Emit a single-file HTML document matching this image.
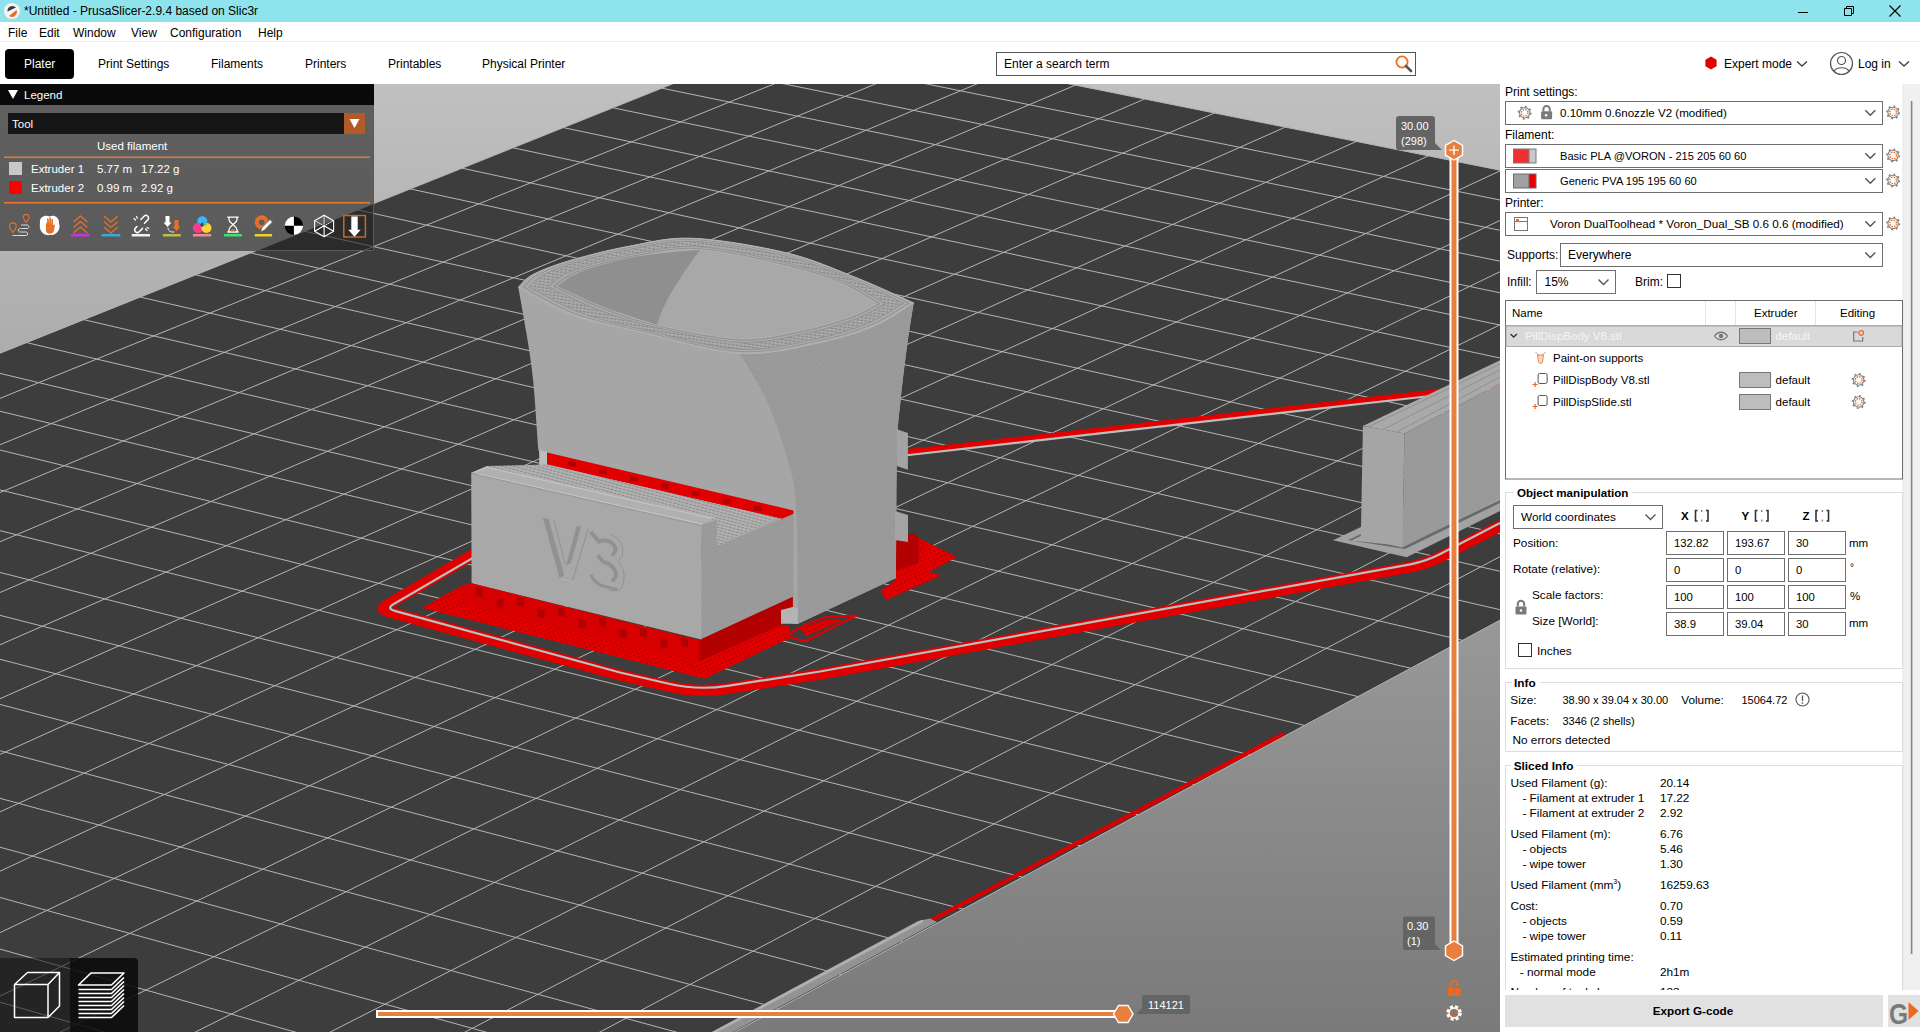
<!DOCTYPE html>
<html><head><meta charset="utf-8">
<style>
*{box-sizing:border-box}
html,body{margin:0;padding:0;width:1920px;height:1032px;overflow:hidden;background:#fff;font-family:"Liberation Sans",sans-serif;font-size:12px;color:#000}
.a{position:absolute;white-space:pre;line-height:1}
#title{position:absolute;left:0;top:0;width:1920px;height:22px;background:#8fe3ec}
#menu{position:absolute;left:0;top:22px;width:1920px;height:20px;background:#fff;border-bottom:1px solid #ececec}
#tabs{position:absolute;left:0;top:42px;width:1920px;height:42px;background:#fff}
#canvas{position:absolute;left:0;top:84px;width:1500px;height:948px;overflow:hidden;background:#7a7a7a}
#panel{position:absolute;left:1500px;top:84px;width:420px;height:948px;background:#fff;overflow:hidden}
.combo{position:absolute;border:1px solid #6e6e6e;background:#fff}
.chev{position:absolute;width:8px;height:8px;border-right:1.6px solid #555;border-bottom:1.6px solid #555;transform:rotate(45deg)}
</style></head><body>
<div id="title">
 <svg class="a" style="left:3px;top:2px" width="18" height="18" viewBox="0 0 18 18"><circle cx="9" cy="9" r="8" fill="#f4f4f4"/><path d="M4.5 9.5 A5 5 0 0 1 13 5.5 Z" fill="#3a3a3a"/><path d="M13.5 8 A5 5 0 0 1 6 14 Z" fill="#ec6a1e"/></svg>
 <div class="a" style="left:24px;top:5px;font-size:12px;color:#000">*Untitled - PrusaSlicer-2.9.4 based on Slic3r</div>
 <svg class="a" style="left:1797px;top:6px" width="12" height="12"><path d="M1 6.5H11" stroke="#000" stroke-width="1"/></svg>
 <svg class="a" style="left:1843px;top:5px" width="12" height="12"><path d="M1.5 3.5h7v7h-7z M3.5 3.5V1.5h7v7h-2" fill="none" stroke="#000" stroke-width="1"/></svg>
 <svg class="a" style="left:1888px;top:4px" width="14" height="14"><path d="M1.5 1.5L12.5 12.5M12.5 1.5L1.5 12.5" stroke="#000" stroke-width="1.1"/></svg>
</div>
<div id="menu">
 <div class="a" style="left:8px;top:5px">File</div>
 <div class="a" style="left:39px;top:5px">Edit</div>
 <div class="a" style="left:73px;top:5px">Window</div>
 <div class="a" style="left:131px;top:5px">View</div>
 <div class="a" style="left:170px;top:5px">Configuration</div>
 <div class="a" style="left:258px;top:5px">Help</div>
</div>
<div id="tabs">
 <div class="a" style="left:5px;top:7px;width:69px;height:30px;background:#000;border-radius:4px"></div>
 <div class="a" style="left:24px;top:16px;color:#fff">Plater</div>
 <div class="a" style="left:98px;top:16px">Print Settings</div>
 <div class="a" style="left:211px;top:16px">Filaments</div>
 <div class="a" style="left:305px;top:16px">Printers</div>
 <div class="a" style="left:388px;top:16px">Printables</div>
 <div class="a" style="left:482px;top:16px">Physical Printer</div>
 <div class="a" style="left:996px;top:10px;width:420px;height:24px;border:1px solid #555;background:#fff"></div>
 <div class="a" style="left:1004px;top:16px">Enter a search term</div>
 <svg class="a" style="left:1394px;top:12px" width="20" height="20" viewBox="0 0 20 20"><circle cx="8" cy="8" r="5.6" fill="none" stroke="#e8701f" stroke-width="1.8"/><path d="M12 12L17 17" stroke="#555" stroke-width="2.6" stroke-linecap="round"/></svg>
 <svg class="a" style="left:1704px;top:14px" width="14" height="14" viewBox="0 0 14 14"><polygon points="7,0.5 12.6,3.7 12.6,10.3 7,13.5 1.4,10.3 1.4,3.7" fill="#e20000"/></svg>
 <div class="a" style="left:1724px;top:16px">Expert mode</div>
 <svg class="a" style="left:1796px;top:18px" width="12" height="8"><path d="M1 1.5L6 6L11 1.5" fill="none" stroke="#444" stroke-width="1.4"/></svg>
 <svg class="a" style="left:1829px;top:9px" width="25" height="25" viewBox="0 0 25 25"><circle cx="12.5" cy="12.5" r="11" fill="none" stroke="#555" stroke-width="1.2"/><circle cx="12.5" cy="9.5" r="4" fill="none" stroke="#555" stroke-width="1.2"/><path d="M5 20.5C7 15.5 18 15.5 20 20.5" fill="none" stroke="#555" stroke-width="1.2"/></svg>
 <div class="a" style="left:1858px;top:16px">Log in</div>
 <svg class="a" style="left:1898px;top:18px" width="12" height="8"><path d="M1 1.5L6 6L11 1.5" fill="none" stroke="#444" stroke-width="1.4"/></svg>
</div>
<div id="canvas">
<svg width="1500" height="948" viewBox="0 0 1500 948" style="position:absolute;left:0;top:0;display:block">
<defs><linearGradient id="bg" x1="0" y1="0" x2="0" y2="1"><stop offset="0" stop-color="#c0c0c0"/><stop offset="1" stop-color="#7a7a7a"/></linearGradient></defs>
<rect width="1500" height="948" fill="url(#bg)"/>
<polygon fill="#3d3d3d" points="804.9,-53.1 2109.1,208.3 -232.8,1468.9 -1743.6,967.5"/>
<path fill="none" stroke="#b5b5b5" stroke-width="1" d="M804.9 -53.1L-1743.6 967.5M871.6 -39.7L-1668.9 992.3M938.9 -26.2L-1593.1 1017.4M1006.8 -12.6L-1516.4 1042.9M1075.4 1.1L-1438.7 1068.7M1144.6 15.0L-1359.9 1094.8M1214.5 29.0L-1280.1 1121.3M1285.1 43.2L-1199.3 1148.1M1356.4 57.4L-1117.3 1175.3M1428.4 71.9L-1034.3 1202.9M1501.0 86.4L-950.1 1230.8M1574.4 101.1L-864.7 1259.2M1648.5 116.0L-778.2 1287.9M1723.4 131.0L-690.5 1317.0M1799.0 146.1L-601.5 1346.5M1875.3 161.4L-511.3 1376.5M1952.5 176.9L-419.8 1406.8M2030.4 192.5L-327.0 1437.6M2109.1 208.3L-232.8 1468.9M804.9 -53.1L2109.1 208.3M757.9 -34.2L2067.3 230.8M710.3 -15.2L2024.9 253.6M662.0 4.2L1981.9 276.7M613.1 23.8L1938.2 300.2M563.4 43.6L1893.9 324.1M513.1 63.8L1848.9 348.3M462.1 84.2L1803.2 372.9M410.3 104.9L1756.8 397.9M357.9 126.0L1709.7 423.3M304.6 147.3L1661.8 449.0M250.6 168.9L1613.2 475.2M195.8 190.8L1563.8 501.8M140.3 213.1L1513.6 528.8M83.9 235.7L1462.5 556.3M26.6 258.6L1410.7 584.2M-31.5 281.9L1358.0 612.6M-90.4 305.5L1304.4 641.4M-150.3 329.4L1249.9 670.8M-211.1 353.8L1194.5 700.6M-272.8 378.5L1138.1 730.9M-335.5 403.6L1080.8 761.8M-399.2 429.1L1022.5 793.2M-463.8 455.0L963.1 825.1M-529.5 481.3L902.7 857.6M-596.3 508.0L841.3 890.7M-664.1 535.2L778.7 924.4M-733.1 562.8L715.0 958.7M-803.1 590.9L650.1 993.6M-874.4 619.4L584.0 1029.2M-946.8 648.4L516.7 1065.5M-1020.4 677.9L448.1 1102.4M-1095.3 707.9L378.2 1140.0M-1171.5 738.4L306.9 1178.3M-1249.0 769.4L234.3 1217.4M-1327.8 801.0L160.3 1257.3M-1408.1 833.1L84.7 1297.9M-1489.7 865.8L7.7 1339.4M-1572.8 899.1L-70.8 1381.7M-1657.5 933.0L-151.0 1424.8M-1743.6 967.5L-232.8 1468.9"/>
<g transform="translate(0,-84)">
<defs><pattern id="hat" width="4" height="3" patternUnits="userSpaceOnUse" patternTransform="rotate(8)"><rect width="4" height="3" fill="#aaaaaa"/><rect x="0.5" y="1.8" width="2.6" height="1.1" fill="#7e7e7e"/></pattern><pattern id="hat2" width="4" height="3" patternUnits="userSpaceOnUse" patternTransform="rotate(15)"><rect width="4" height="3" fill="#b2b2b2"/><rect x="0.4" y="1.9" width="2.8" height="1" fill="#858585"/></pattern><pattern id="layers" width="6" height="2.2" patternUnits="userSpaceOnUse" patternTransform="rotate(-12)"><rect width="6" height="2.2" fill="#9d9d9d"/><rect y="1.4" width="6" height="0.7" fill="#939393"/></pattern><pattern id="dots" width="4" height="4" patternUnits="userSpaceOnUse" patternTransform="rotate(-25)"><rect width="4" height="4" fill="#e20000"/><rect x="1.5" y="1.5" width="1.2" height="1.2" fill="#8a0000"/></pattern></defs>
<path d="M1519.7 383.1L1425.7 393.6Q1425.7 393.6 1425.7 393.6L908.6 452.1Q908.6 452.1 908.6 452.1L581.0 495.9Q571.0 497.2 562.4 502.2L384.5 606.0" fill="none" stroke="#e00000" stroke-width="6" stroke-linejoin="round"/>
<path d="M570.1 496.7L386.6 603.7Q376.3 609.8 387.8 612.9L619.1 676.2Q619.1 676.2 619.1 676.2L668.6 687.6Q697.9 694.4 727.5 689.8L820.6 675.2Q820.6 675.2 820.6 675.2L1411.5 568.0Q1427.2 565.1 1441.4 557.8L1501.8 526.4" fill="none" stroke="#e00000" stroke-width="8.5" stroke-linejoin="round"/>
<path d="M573.0 501.7L398.0 603.8Q391.1 607.8 398.8 609.9L620.5 670.6Q620.5 670.6 620.5 670.6L668.8 681.7Q698.1 688.5 727.7 683.8L819.7 669.5Q819.7 669.5 819.7 669.5L1409.6 562.4Q1425.3 559.6 1439.5 552.2L1499.1 521.2" fill="none" stroke="#e00000" stroke-width="2" stroke-linejoin="round"/>
<path d="M1520.0 386.0L1426.0 396.5Q1426.0 396.5 1426.0 396.5L909.0 455.0Q909.0 455.0 909.0 455.0L581.9 498.7Q572.0 500.0 563.4 505.0L393.8 604.0Q386.0 608.5 394.7 610.9L620.0 672.5Q620.0 672.5 620.0 672.5L668.8 683.8Q698.0 690.5 727.6 685.9L820.0 671.5Q820.0 671.5 820.0 671.5L1410.3 564.4Q1426.0 561.5 1440.2 554.1L1500.0 523.0" fill="none" stroke="#bdbdbd" stroke-width="2.2" stroke-linejoin="round"/>
<path d="M1333.0 540.2L1363.0 526.0L1500.0 466.0L1500.0 511.0L1406.6 557.2Z" fill="#a2a2a2"/>
<path d="M1348.0 540.0L1363.0 533.0L1500.0 473.0L1500.0 503.0L1405.0 549.0Z" fill="#3d3d3d" fill-opacity="0.55"/>
<path d="M1351.0 540.5L1363.0 535.0L1500.0 476.0L1500.0 500.0L1404.0 546.0Z" fill="#a6a6a6"/>
<path d="M1362.9 426.1L1500.4 360.0L1500.4 383.5L1404.5 433.6Z" fill="#a9a9a9"/>
<path d="M1366.0 428.0L1500.0 364.0M1380 431L1500 370M1395 433L1500 377" stroke="#8d8d8d" stroke-width="0.9" fill="none"/>
<path d="M1404.5 433.6L1500.4 383.5L1500.4 498.6L1402.3 547.6Z" fill="url(#layers)"/>
<path d="M1362.9 426.1L1404.5 433.6L1402.3 547.6L1360.8 538.0Z" fill="#a5a5a5"/>
<path d="M893.0 537.0L918.6 538.0L957.0 557.0L929.2 572.0L942.0 575.2L886.6 599.7L880.2 591.2L895.0 580.6Z" fill="url(#dots)"/>
<path d="M893.0 539.0L913.0 533.0L918.6 538.0L918.6 563.0L893.0 572.0Z" fill="#b30000"/>
<path d="M518.3 287.2C520.8 285.1 524.4 278.9 533.0 274.5C541.6 270.1 553.8 265.2 570.0 260.5C586.2 255.8 609.4 249.7 630.0 246.0C650.6 242.3 667.5 237.1 693.7 238.3C719.9 239.5 760.0 246.4 787.2 253.0C814.4 259.6 835.9 269.7 857.0 278.0C878.1 286.3 904.2 298.8 913.7 302.9C912.7 309.4 909.8 325.9 907.6 342.1C905.4 358.3 902.4 382.0 900.6 400.0C898.8 418.0 897.8 420.3 897.0 450.0C896.2 479.7 896.2 556.7 896.0 578.0L798 623.8L792.6 623.8L792.6 548L716.8 548L547 468L538.3 449.8C537.4 438.2 535.1 399.7 533.1 380.0C531.1 360.3 528.7 347.2 526.2 331.7C523.7 316.2 519.6 294.6 518.3 287.2Z" fill="#a6a6a6"/>
<path d="M739.8 353.5C744.2 361.2 758.6 383.1 766.3 400.0C774.0 416.9 781.0 437.5 786.0 455.0C791.0 472.5 794.0 476.9 796.0 505.0C798.0 533.1 797.7 604.0 798.0 623.8L896 578C896.2 556.7 896.2 479.7 897.0 450.0C897.8 420.3 898.8 418.0 900.6 400.0C902.4 382.0 905.4 358.3 907.6 342.1C909.8 325.9 912.7 309.4 913.7 302.9C907.3 306.7 890.7 319.0 875.4 325.5C860.1 332.0 844.6 337.4 822.0 342.1C799.4 346.8 753.5 351.6 739.8 353.5Z" fill="url(#layers)"/>
<path d="M518.3 287.2C520.8 285.1 524.4 278.9 533.0 274.5C541.6 270.1 553.8 265.2 570.0 260.5C586.2 255.8 609.4 249.7 630.0 246.0C650.6 242.3 667.5 237.1 693.7 238.3C719.9 239.5 760.0 246.4 787.2 253.0C814.4 259.6 835.9 269.7 857.0 278.0C878.1 286.3 904.2 298.8 913.7 302.9C907.3 306.7 890.7 319.0 875.4 325.5C860.1 332.0 844.6 337.4 822.0 342.1C799.4 346.8 770.2 355.2 739.8 353.5C709.4 351.8 667.9 338.6 639.6 332.0C611.3 325.4 590.0 321.7 569.8 314.2C549.6 306.7 526.9 291.7 518.3 287.2Z" fill="#a4a4a4"/>
<path d="M530.1 286.9C532.6 284.9 537.0 278.9 545.0 274.8C553.0 270.7 563.3 266.6 577.9 262.3C592.6 258.0 613.4 252.4 633.0 249.0C652.6 245.6 669.9 240.4 695.6 241.7C721.3 243.1 761.1 250.8 787.1 257.1C813.2 263.3 832.7 271.8 851.9 279.5C871.1 287.2 894.0 299.2 902.5 303.1C896.7 306.4 882.3 316.9 867.8 322.8C853.3 328.7 836.7 334.3 815.4 338.6C794.1 343.0 768.3 350.5 739.9 349.0C711.4 347.5 671.4 336.0 644.8 329.8C618.2 323.7 599.4 319.2 580.3 312.1C561.1 305.0 538.5 291.1 530.1 286.9Z" fill="url(#hat)"/>
<path d="M546.6 286.6C549.1 284.7 554.7 278.9 561.8 275.2C568.9 271.6 576.4 268.4 589.0 264.7C601.6 261.1 619.0 256.2 637.2 253.2C655.4 250.2 673.3 244.9 698.2 246.5C723.2 248.1 762.6 256.9 787.1 262.7C811.5 268.6 828.2 274.8 844.8 281.6C861.4 288.4 879.7 299.8 886.7 303.5C881.8 306.1 870.5 314.0 857.1 319.0C843.7 324.1 825.7 329.8 806.2 333.7C786.6 337.7 765.6 343.9 739.9 342.7C714.3 341.5 676.3 332.3 652.1 326.7C628.0 321.2 612.5 315.9 594.9 309.2C577.3 302.5 554.7 290.3 546.6 286.6Z" fill="#a2a2a2"/>
<path d="M520.7 287.1C523.1 285.0 526.9 278.9 535.4 274.6C543.9 270.2 555.7 265.5 571.6 260.9C587.5 256.2 610.2 250.2 630.6 246.6C651.0 243.0 668.0 237.8 694.1 239.0C720.2 240.2 760.2 247.3 787.2 253.8C814.2 260.4 835.3 270.1 856.0 278.3C876.7 286.5 902.2 298.8 911.5 302.9C905.2 306.6 889.0 318.6 873.9 325.0C858.7 331.4 843.0 336.8 820.7 341.4C798.3 346.0 769.8 354.2 739.8 352.6C709.8 351.0 668.6 338.0 640.6 331.6C612.7 325.1 591.9 321.2 571.9 313.8C551.9 306.4 529.2 291.6 520.7 287.1Z" fill="none" stroke="#b4b4b4" stroke-width="0.8"/>
<path d="M523.4 287.1C525.9 285.0 529.9 278.9 538.2 274.6C546.5 270.3 557.9 265.8 573.4 261.3C588.9 256.7 611.1 250.9 631.3 247.3C651.5 243.7 668.5 238.5 694.5 239.8C720.5 241.0 760.5 248.3 787.2 254.8C813.9 261.2 834.5 270.6 854.8 278.6C875.1 286.7 899.8 298.9 908.8 303.0C902.7 306.6 887.0 318.1 872.1 324.3C857.2 330.6 841.2 336.1 819.1 340.6C797.1 345.1 769.4 353.1 739.8 351.6C710.3 350.0 669.4 337.4 641.9 331.1C614.3 324.7 594.1 320.6 574.3 313.3C554.6 306.0 531.9 291.5 523.4 287.1Z" fill="none" stroke="#8e8e8e" stroke-width="0.8"/>
<path d="M526.2 287.0C528.6 285.0 532.8 278.9 541.0 274.7C549.2 270.5 560.1 266.1 575.3 261.7C590.4 257.2 612.1 251.5 632.0 248.0C651.9 244.5 669.1 239.3 695.0 240.6C720.8 241.9 760.7 249.3 787.2 255.7C813.6 262.1 833.8 271.1 853.6 279.0C873.4 286.9 897.4 299.1 906.2 303.1C900.2 306.5 885.1 317.6 870.3 323.7C855.6 329.8 839.3 335.3 817.6 339.8C795.9 344.2 768.9 352.0 739.8 350.5C710.8 349.0 670.3 336.8 643.1 330.5C615.9 324.3 596.3 320.1 576.8 312.8C557.3 305.5 534.6 291.3 526.2 287.0Z" fill="none" stroke="#b4b4b4" stroke-width="0.8"/>
<path d="M528.9 287.0C531.4 284.9 535.8 278.9 543.8 274.8C551.8 270.6 562.3 266.4 577.1 262.1C591.9 257.7 613.0 252.2 632.7 248.7C652.4 245.2 669.7 240.1 695.4 241.4C721.1 242.7 761.0 250.3 787.1 256.6C813.3 263.0 833.0 271.6 852.4 279.4C871.8 287.1 895.0 299.2 903.6 303.1C897.7 306.4 883.1 317.1 868.5 323.1C854.0 329.0 837.5 334.6 816.1 339.0C794.6 343.4 768.5 350.9 739.9 349.4C711.2 348.0 671.1 336.2 644.3 330.0C617.5 323.8 598.5 319.5 579.2 312.3C560.0 305.1 537.3 291.2 528.9 287.0Z" fill="none" stroke="#8e8e8e" stroke-width="0.8"/>
<path d="M548.2 286.5C550.7 284.6 556.4 278.8 563.4 275.3C570.4 271.7 577.7 268.6 590.1 265.0C602.4 261.4 619.5 256.6 637.6 253.6C655.7 250.6 673.6 245.4 698.5 247.0C723.4 248.6 762.8 257.5 787.0 263.3C811.3 269.1 827.7 275.1 844.1 281.8C860.4 288.5 878.3 299.9 885.2 303.5C880.3 306.0 869.4 313.7 856.1 318.7C842.8 323.6 824.6 329.4 805.3 333.3C785.9 337.2 765.4 343.2 740.0 342.1C714.5 341.0 676.8 332.0 652.8 326.5C628.9 320.9 613.8 315.5 596.3 308.9C578.9 302.2 556.2 290.2 548.2 286.5Z" fill="none" stroke="#8e8e8e" stroke-width="0.8"/>
<path d="M550.9 286.5C553.5 284.6 559.4 278.8 566.2 275.3C573.0 271.8 579.9 268.9 591.9 265.4C603.9 261.9 620.5 257.2 638.3 254.3C656.1 251.4 674.1 246.1 698.9 247.8C723.7 249.4 763.0 258.5 787.0 264.2C811.0 269.9 827.0 275.6 842.9 282.1C858.8 288.7 876.0 300.0 882.6 303.6C877.9 306.0 867.5 313.2 854.3 318.0C841.2 322.8 822.8 328.6 803.7 332.5C784.7 336.3 764.9 342.1 740.0 341.1C715.0 340.0 677.6 331.4 654.0 325.9C630.5 320.5 616.0 315.0 598.8 308.4C581.6 301.8 558.9 290.1 550.9 286.5Z" fill="none" stroke="#b4b4b4" stroke-width="0.8"/>
<path d="M553.7 286.4C556.2 284.6 562.3 278.8 569.0 275.4C575.7 272.0 582.1 269.2 593.8 265.8C605.4 262.4 621.4 257.9 639.0 255.0C656.6 252.1 674.7 246.9 699.4 248.6C724.0 250.3 763.3 259.5 787.0 265.1C810.7 270.8 826.2 276.1 841.7 282.5C857.2 288.9 873.6 300.1 880.0 303.6C875.4 305.9 865.5 312.7 852.5 317.4C839.6 322.1 821.0 327.9 802.2 331.7C783.4 335.4 764.5 341.0 740.0 340.0C715.5 339.0 678.4 330.8 655.3 325.4C632.1 320.1 618.1 314.4 601.2 307.9C584.3 301.4 561.6 290.0 553.7 286.4Z" fill="none" stroke="#8e8e8e" stroke-width="0.8"/>
<path d="M557.6 286.3C560.2 284.5 566.5 278.8 573.0 275.5C579.5 272.2 585.2 269.6 596.4 266.4C607.6 263.1 622.7 258.8 640.0 256.0C657.3 253.2 675.5 247.9 700.0 249.7C724.5 251.4 763.7 260.9 787.0 266.5C810.3 272.1 825.1 276.8 840.0 283.0C854.9 289.2 870.2 300.2 876.2 303.7C871.8 305.8 862.7 312.0 850.0 316.5C837.3 321.0 818.3 326.8 800.0 330.5C781.7 334.2 763.8 339.5 740.0 338.5C716.2 337.5 679.5 329.9 657.0 324.7C634.5 319.5 621.3 313.6 604.7 307.2C588.1 300.8 565.5 289.8 557.6 286.3Z" fill="#a8a8a8" stroke="#b0b0b0" stroke-width="1"/>
<path d="M557.6 286.3C560.2 284.5 566.5 278.8 573.0 275.5C579.5 272.2 585.2 269.6 596.4 266.4C607.6 263.1 622.7 258.8 640.0 256.0C657.3 253.2 690.0 250.8 700.0 249.7C682 275 664 300 657 324.7C648.3 321.8 621.3 313.6 604.7 307.2C588.1 300.8 565.5 289.8 557.6 286.3Z" fill="#8f8f8f"/>
<path d="M518.3 287.2C526.9 291.7 549.6 306.7 569.8 314.2C590.0 321.7 611.3 325.4 639.6 332.0C667.9 338.6 709.4 351.8 739.8 353.5C770.2 355.2 799.4 346.8 822.0 342.1C844.6 337.4 860.1 332.0 875.4 325.5C890.7 319.0 907.3 306.7 913.7 302.9" fill="none" stroke="#b2b2b2" stroke-width="1"/>
<path d="M518.3 287.2C520.8 285.1 524.4 278.9 533.0 274.5C541.6 270.1 553.8 265.2 570.0 260.5C586.2 255.8 609.4 249.7 630.0 246.0C650.6 242.3 667.5 237.1 693.7 238.3C719.9 239.5 760.0 246.4 787.2 253.0C814.4 259.6 835.9 269.7 857.0 278.0C878.1 286.3 904.2 298.8 913.7 302.9" fill="none" stroke="#b2b2b2" stroke-width="1"/>
<path d="M896.8 429.2L907.9 433.0L907.9 469.7L896.8 466.0Z" fill="#a4a4a4"/>
<path d="M895.0 511.0L908.0 515.0L908.0 542.0L895.0 540.0Z" fill="#a4a4a4"/>
<path d="M547.0 452.5L793.4 510.4L793.4 514.0L782.7 519.1L547.0 464.6Z" fill="#e00000"/>
<rect x="568.0" y="461.5" width="8" height="5" fill="#b30000"/>
<rect x="599.0" y="468.9" width="8" height="5" fill="#b30000"/>
<rect x="630.0" y="476.3" width="8" height="5" fill="#b30000"/>
<rect x="661.0" y="483.7" width="8" height="5" fill="#b30000"/>
<rect x="692.0" y="491.2" width="8" height="5" fill="#b30000"/>
<rect x="723.0" y="498.6" width="8" height="5" fill="#b30000"/>
<rect x="754.0" y="506.0" width="8" height="5" fill="#b30000"/>
<path d="M539.2 449.8L547.0 452.0L547.0 465.5L539.2 465.5Z" fill="#bdbdbd"/>
<path d="M471.2 472.8L486.8 466.0L547.0 464.6L782.7 519.1L776.0 518.5L716.8 546.2L716.8 520.0L701.4 525.0Z" fill="url(#hat2)"/>
<path d="M421.6 607.7L462.3 585.6L471.6 583.3L699.0 640.0L792.6 596.6L792.6 607.5L781.0 611.6L781.0 625.1L790.0 626.0L790.0 638.0L704.4 678.7Z" fill="url(#dots)"/>
<path d="M699.0 640.0L792.6 596.6L792.6 607.5L781.0 611.6L781.0 625.1L699.0 661.8Z" fill="#b30000"/>
<path d="M701.4 525.0L716.8 520.0L716.8 546.2L793.4 514.0L793.4 596.6L700.3 639.4Z" fill="url(#layers)"/>
<path d="M471.2 472.8L701.4 524.8L701.3 639.4L471.6 583.3Z" fill="#a8a8a8"/>
<path d="M471.2 472.8L486.8 466.5L716.0 517.0L701.4 524.8Z" fill="#b0b0b0"/>
<path d="M474.0 472.5L487.5 467.5L712.0 518.5M478 474L702 524" fill="none" stroke="#c8c8c8" stroke-width="0.9"/>
<path d="M471.2 473.5L701.4 525.5" fill="none" stroke="#959595" stroke-width="0.8"/>
<g><path d="M542.9 518.1L548.6 519.0L564.2 575.2L559.7 578.4Z" fill="#919191"/><path d="M576.5 526.1L581.0 526.6L571.0 562.9L566.1 565.2Z" fill="#919191"/><path d="M554.1 520.3L565.3 564.5" stroke="#8c8c8c" stroke-width="0.8" fill="none"/><path d="M588.2 528.8L572.4 581.0L560.0 577.8" stroke="#8c8c8c" stroke-width="0.9" fill="none"/><path d="M559.7 578.4L572.8 581.5" stroke="#b8b8b8" stroke-width="1.2" fill="none"/><path d="M590.9 532.0Q594.6 536.2 598.9 541.6Q608.5 538.4 613.8 544.8Q618.1 551.2 611.7 555.4" stroke="#919191" stroke-width="4" fill="none"/><path d="M597.8 555.4Q601.0 559.7 603.1 561.8Q611.7 564.0 614.9 570.4Q618.1 577.8 611.7 581.0" stroke="#919191" stroke-width="4" fill="none"/><path d="M590.9 574.6Q593.6 582.1 601.0 585.3Q611.7 588.5 617.0 589.5" stroke="#919191" stroke-width="3" fill="none"/><path d="M610.6 534.1Q625.5 540.5 622.3 556.5Q615.9 560.8 620.2 564.0Q627.7 574.6 621.3 588.5Q615.9 591.7 608.5 590.6" stroke="#8e8e8e" stroke-width="0.9" fill="none"/></g>
<path d="M462.3 585.6L471.6 583.3L699.2 640.8L699.2 661.7L462.3 604.2Z" fill="#d60000"/>
<path d="M476.0 587.4L483.0 589.1L483.0 597.4L476.0 595.7Z" fill="#b30000"/>
<path d="M496.5 598.4L503.5 600.1L503.5 608.4L496.5 606.7Z" fill="#b30000"/>
<path d="M517.0 597.4L524.0 599.1L524.0 607.4L517.0 605.7Z" fill="#b30000"/>
<path d="M537.5 608.4L544.5 610.1L544.5 618.4L537.5 616.7Z" fill="#b30000"/>
<path d="M558.0 607.4L565.0 609.1L565.0 617.4L558.0 615.7Z" fill="#b30000"/>
<path d="M578.5 618.4L585.5 620.1L585.5 628.4L578.5 626.7Z" fill="#b30000"/>
<path d="M599.0 617.4L606.0 619.1L606.0 627.4L599.0 625.7Z" fill="#b30000"/>
<path d="M619.5 628.4L626.5 630.1L626.5 638.4L619.5 636.7Z" fill="#b30000"/>
<path d="M640.0 627.4L647.0 629.1L647.0 637.4L640.0 635.7Z" fill="#b30000"/>
<path d="M660.5 638.4L667.5 640.1L667.5 648.4L660.5 646.7Z" fill="#b30000"/>
<path d="M681.0 637.4L688.0 639.1L688.0 647.4L681.0 645.7Z" fill="#b30000"/>
<path d="M781.0 610.0L792.6 607.0L798.0 608.9L798.0 623.8L781.0 623.8Z" fill="#b4b4b4"/>
<path d="M791.3 632.0L812.0 622.0L826.6 617.0L856.4 615.6L804.8 641.4L791.3 637.4Z" fill="none" stroke="#e00000" stroke-width="2.2" stroke-linejoin="round"/>
<path d="M800.0 628.0L826.0 620.0L845.0 619.0L806.0 636.0Z" fill="url(#dots)"/>
<path d="M1284.0 733.5L930.0 921.0" fill="none" stroke="#d80000" stroke-width="4.2"/>
<path d="M918.0 921.0L930.0 918.5L937.0 922.0L733.0 1032.0L712.0 1032.0Z" fill="#939393"/>
<path d="M922.0 921.2L711.0 1034.0" fill="none" stroke="#b0b0b0" stroke-width="2.6" stroke-linecap="round"/>
</g>
</svg><svg style="position:absolute;left:0;top:0" width="1500" height="948" viewBox="0 84 1500 948" font-family="Liberation Sans, sans-serif">
 <!-- legend -->
 <rect x="0" y="105" width="373.5" height="145.5" fill="#1f1f1f" fill-opacity="0.6"/>
 <path d="M373.5 105V250.5H0" fill="none" stroke="#5a5a66" stroke-width="1"/>
 <rect x="0" y="84" width="374" height="21" fill="#0a0a0a"/>
 <polygon points="8,90 18,90 13,99" fill="#fff"/>
 <text x="24" y="98.5" font-size="11.5" fill="#fff">Legend</text>
 <rect x="8" y="113" width="336" height="21" fill="#161616"/>
 <rect x="344" y="113" width="21" height="21" fill="#b35b26"/>
 <polygon points="349.5,119 359.5,119 354.5,128" fill="#fff"/>
 <text x="12" y="127.5" font-size="11.5" fill="#fff">Tool</text>
 <text x="97" y="150" font-size="11.5" fill="#fff">Used filament</text>
 <rect x="4" y="156.5" width="366" height="1.5" fill="#e67b30"/>
 <rect x="9" y="162" width="13" height="13" fill="#c8c8c8"/>
 <text x="31" y="173" font-size="11.5" fill="#fff">Extruder 1</text>
 <text x="97" y="173" font-size="11.5" fill="#fff">5.77 m</text>
 <text x="141" y="173" font-size="11.5" fill="#fff">17.22 g</text>
 <rect x="9" y="181" width="13" height="13" fill="#ff0000"/>
 <text x="31" y="192" font-size="11.5" fill="#fff">Extruder 2</text>
 <text x="97" y="192" font-size="11.5" fill="#fff">0.99 m</text>
 <text x="141" y="192" font-size="11.5" fill="#fff">2.92 g</text>
 <rect x="4" y="202" width="366" height="1.5" fill="#e67b30"/>
 <!-- legend icons -->
 <g stroke-linecap="round" stroke-linejoin="round">
  <g fill="none" stroke="#e8702a" stroke-width="1.1"><path d="M12.9 232.5C10.5 229.5 9.5 228 9.5 226.3A3.4 3.4 0 0 1 16.3 226.3C16.3 228 15.3 229.5 12.9 232.5Z"/><path d="M26.2 222.5C24.2 220 23.3 218.8 23.3 217.3A2.9 2.9 0 0 1 29.1 217.3C29.1 218.8 28.2 220 26.2 222.5Z"/></g>
  <path d="M13 235.5H25.5C28.5 235.5 28.5 232 25.5 232H20.5C17.5 232 17.5 228.5 20.5 228.5H27C29.5 228.5 29.5 225 27 225H21.5" fill="none" stroke="#e8e8e8" stroke-width="1" stroke-dasharray="1.2 0.9"/>
  <g transform="translate(49.5,226)"><path d="M-9.5 -3C-10.5 -9 -4 -11.5 0 -9.5C4 -11.5 10 -9 9.5 -2.5C11.5 2 8 9.5 1 9C-5 10 -11 6 -9.5 -3Z" fill="#fff"/><path d="M-3.5 -4V4.5C-3.5 8.5 3.5 9 4.5 4.5L5.5 -1.5L3.5 -1V-7H2V-2L1.2 -8.5H-0.3V-2L-1 -7.5H-2.4V-2Z" fill="#e8702a"/></g>
  <g fill="none" stroke="#e8702a" stroke-width="1.3"><path d="M74 221.5L80.4 216L86.8 221.5M74 227L80.4 221.5L86.8 227M74 232.5L80.4 227L86.8 232.5"/><path d="M104.5 216.5L110.9 222L117.3 216.5M104.5 222L110.9 227.5L117.3 222M104.5 227.5L110.9 233L117.3 227.5"/></g>
  <rect x="71" y="234" width="18.6" height="2.5" fill="#c03ad8"/>
  <rect x="101.5" y="234" width="18.8" height="2.5" fill="#3aa8d8"/>
  <g fill="none" stroke="#fff" stroke-width="1.5"><path d="M137 226.5L135.5 228A2.6 2.6 0 0 0 139.2 231.7L142.5 228.4M144.5 223.2L147.8 219.9A2.6 2.6 0 0 0 144.1 216.2L140.8 219.5"/><path d="M134 218.5L135.5 220M136.5 216.5L137.2 218.3M147 230.5L145.5 229M148.8 228.2L147 227.6" stroke-width="1.2"/></g>
  <rect x="131.7" y="234" width="18.3" height="2.5" fill="#f0f0f0"/>
  <g><path d="M165.5 216H169.5V222.5H171.5L167.5 227L163.5 222.5H165.5Z" fill="#fff"/><path d="M174.5 220H178.5V226.5H180.5L176.5 231L172.5 226.5H174.5Z" fill="#e8702a"/><path d="M168 228C168 231 170.5 232.5 174 232" fill="none" stroke="#fff" stroke-width="0.9"/></g>
  <rect x="162.9" y="234" width="17.8" height="2.5" fill="#bcc040"/>
  <g><circle cx="202.3" cy="221.3" r="5" fill="#3ab4ff"/><circle cx="197.9" cy="228" r="5" fill="#ff3a8a"/><circle cx="206.5" cy="228" r="5" fill="#ffd040"/><path d="M200 224.8L202.3 222.3L204.6 224.8L202.3 227Z" fill="#1a4a7a"/><circle cx="205" cy="224" r="1.8" fill="#6ac050"/></g>
  <rect x="192.9" y="234" width="18.3" height="2.5" fill="#e89090"/>
  <g fill="none" stroke="#fff" stroke-width="1.3"><path d="M227.8 217.2H238.2M227.8 232H238.2M229 217.2V219.5C229 222.5 233 224 233 224.6C233 225.2 229 226.7 229 229.7V232M237 217.2V219.5C237 222.5 233 224 233 224.6C233 225.2 237 226.7 237 229.7V232"/></g>
  <path d="M231 230.5C231 229 235 229 235 230.5Z" fill="#e8702a" stroke="#e8702a" stroke-width="1"/>
  <rect x="223.9" y="234" width="18" height="2.5" fill="#3ae070"/>
  <g><circle cx="261.7" cy="222.3" r="4.2" fill="none" stroke="#e8702a" stroke-width="2.6"/><circle cx="261.7" cy="222.3" r="6" fill="none" stroke="#e8702a" stroke-width="2" stroke-dasharray="1.8 1.6"/><path d="M260.5 232L262 227.5L270 219.5L272.5 222L264.5 230Z" fill="#fff" stroke="#606060" stroke-width="0.9"/></g>
  <rect x="254.8" y="234" width="17.3" height="2.5" fill="#e8d030"/>
  <g transform="translate(293.9,225.8)"><circle r="9.2" fill="#000"/><path d="M0 -9.2A9.2 9.2 0 0 0 -9.2 0H0ZM0 9.2A9.2 9.2 0 0 0 9.2 0H0Z" fill="#fff"/></g>
  <g transform="translate(324.1,225.8)" fill="none" stroke="#fff" stroke-width="1.1"><path d="M0 -10.5L9.5 -5V5.5L0 11L-9.5 5.5V-5ZM0 0L-9.5 5.5M0 0L9.5 5.5M0 0V11"/><path d="M0 -10.5V0M0 0L-9 -5M0 0L9 -5" stroke-dasharray="1.2 1.2" stroke-width="0.9"/></g>
  <g><rect x="343.8" y="215.5" width="21.6" height="21.6" fill="#2a2a2a" fill-opacity="0.3" stroke="#c06a2e" stroke-width="1.5"/><path d="M351.3 216.5H357.7V229.7H360.7L354.5 236.7L348.3 229.7H351.3Z" fill="#fff"/></g>
 </g>
 <!-- vertical slider -->
 <rect x="1449.5" y="150" width="9" height="800" fill="#fff"/>
 <rect x="1451.5" y="150" width="5" height="800" fill="#e97f3f"/>
 <polygon points="1454,140.5 1462.5,145.5 1462.5,155 1454,160 1445.5,155 1445.5,145.5" fill="#e97f3f" stroke="#fff" stroke-width="1.4"/>
 <path d="M1454 145.5V155M1449 150.2H1459" stroke="#fff" stroke-width="1.3"/>
 <polygon points="1454,941 1462.5,946 1462.5,955.5 1454,960.5 1445.5,955.5 1445.5,946" fill="#e97f3f" stroke="#fff" stroke-width="1.4"/>
 <path d="M1396 119a3 3 0 0 1 3-3h33a3 3 0 0 1 3 3v24l7 7h-43a3 3 0 0 1-3-3z" fill="#646464"/>
 <text x="1401" y="130" font-size="11" fill="#fff">30.00</text>
 <text x="1401" y="145" font-size="11" fill="#fff">(298)</text>
 <path d="M1403 918.5a2 2 0 0 1 2-2h28a2 2 0 0 1 2 2v25.5l6 6h-36a2 2 0 0 1-2-2z" fill="#646464"/>
 <text x="1407" y="930" font-size="11" fill="#fff">0.30</text>
 <text x="1407" y="945" font-size="11" fill="#fff">(1)</text>
 <g transform="translate(1454,989)"><path d="M-6.5 -1H6.5V7H-6.5Z" fill="#ec6a1e"/><path d="M-3.5 -1V-4.5A3.5 3.5 0 0 1 3.5 -4.5V-3" fill="none" stroke="#ec6a1e" stroke-width="2.2"/><circle cx="0" cy="3" r="1.3" fill="#7f7f7f"/></g>
 <g transform="translate(1454,1013)"><circle r="6.3" fill="none" stroke="#fff" stroke-width="3" stroke-dasharray="3 2"/><circle r="5" fill="none" stroke="#fff" stroke-width="1.3"/><circle r="3.7" fill="none" stroke="#ec6a1e" stroke-width="1"/></g>
 <!-- horizontal slider -->
 <rect x="376" y="1010" width="747" height="8" fill="#fff"/>
 <rect x="378" y="1012" width="745" height="4" fill="#e97f3f"/>
 <polygon points="1113.5,1014 1118.5,1005.5 1128,1005.5 1133,1014 1128,1022.5 1118.5,1022.5" fill="#e97f3f" stroke="#fff" stroke-width="1.4"/>
 <path d="M1142 997a2 2 0 0 1 2-2h44a2 2 0 0 1 2 2v15a2 2 0 0 1-2 2h-44l-8 0l6-6z" fill="#646464"/>
 <text x="1148" y="1009" font-size="11" fill="#fff">114121</text>
 <!-- bottom-left view toolbar -->
 <path d="M0 958H70V1032H0Z" fill="#111" fill-opacity="0.55"/>
 <path d="M70 958H134a4 4 0 0 1 4 4V1032H70Z" fill="#0a0a0a" fill-opacity="0.88"/>
 <g fill="none" stroke="#fff" stroke-width="1.5" stroke-linejoin="round"><path d="M14.5 984.5H48V1017.5H14.5ZM14.5 984.5L27.5 972.5H59.5L48 984.5M59.5 972.5V1006L48 1017.5"/></g>
 <g fill="none" stroke="#fff" stroke-width="1.7" stroke-linejoin="round"><path d="M78.5 985L91 973H124L111.5 985Z"/><path d="M78.5 989.5H111.5L124 977.5M78.5 993.5H111.5L124 981.5M78.5 997.5H111.5L124 985.5M78.5 1001.5H111.5L124 989.5M78.5 1005.5H111.5L124 993.5M78.5 1009.5H111.5L124 997.5M78.5 1013.5H111.5L124 1001.5M78.5 1017.5H111.5L124 1005.5"/></g>
</svg>
</div>
<svg style="position:absolute;left:1500px;top:84px" width="420" height="948" viewBox="1500 84 420 948" font-family="Liberation Sans, sans-serif" font-size="12">
 <defs>
  <g id="gear"><circle r="6.2" fill="none" stroke="#808080" stroke-width="1.6" stroke-dasharray="1.8 3"/><circle r="5.2" fill="#fff" stroke="#808080" stroke-width="1.1"/><circle r="3.3" fill="none" stroke="#ec6a1e" stroke-width="1.3" stroke-dasharray="1.5 1.1"/></g>
  <path id="chev" d="M-5 -2.5L0 2.5L5 -2.5" fill="none" stroke="#555" stroke-width="1.4"/>
 </defs>
 <rect x="1500" y="84" width="420" height="948" fill="#fff"/>
 <!-- scrollbar -->
 <rect x="1903" y="84" width="17" height="906" fill="#f0f0f0"/>
 <rect x="1902.5" y="84" width="1" height="906" fill="#e6e6e6"/>
 <rect x="1910.8" y="101" width="1.6" height="853" fill="#858585"/>
 <text x="1505" y="96.4">Print settings:</text>
 <rect x="1505.5" y="101.5" width="377" height="23" fill="#fff" stroke="#6e6e6e"/>
 <use href="#gear" x="1524.7" y="112.8"/>
 <g transform="translate(1546.6,112.8)"><rect x="-5.5" y="-1.5" width="11" height="8" rx="1" fill="#7a7a7a"/><path d="M-3.2 -1.5V-3.5A3.2 3.2 0 0 1 3.2 -3.5V-1.5" fill="none" stroke="#7a7a7a" stroke-width="2"/><circle cx="-0.5" cy="2.5" r="1.2" fill="#fff"/></g>
 <text x="1560" y="117.2" font-size="11.6">0.10mm 0.6nozzle V2 (modified)</text>
 <use href="#chev" x="1870.3" y="112.8"/>
 <use href="#gear" x="1893.1" y="112.4"/>
 <text x="1505" y="139">Filament:</text>
 <rect x="1505.5" y="144.5" width="377" height="23" fill="#fff" stroke="#6e6e6e"/>
 <rect x="1513" y="148.5" width="23.5" height="15" fill="#7a7a7a"/>
 <rect x="1514" y="149.5" width="14.5" height="13" fill="#f03030"/>
 <rect x="1529.5" y="149.5" width="6" height="13" fill="#c8c8c8"/>
 <text x="1560" y="159.8" font-size="11.1">Basic PLA @VORON - 215 205 60 60</text>
 <use href="#chev" x="1870.3" y="155.8"/>
 <use href="#gear" x="1893.1" y="155.4"/>
 <rect x="1505.5" y="169.5" width="377" height="23" fill="#fff" stroke="#6e6e6e"/>
 <rect x="1513" y="173.5" width="23.5" height="15" fill="#6a6a6a"/>
 <rect x="1514" y="174.5" width="14.5" height="13" fill="#a0a0a0"/>
 <rect x="1529.5" y="174.5" width="6" height="13" fill="#ee0000"/>
 <text x="1560" y="185" font-size="11.1">Generic PVA 195 195 60 60</text>
 <use href="#chev" x="1870.3" y="180.8"/>
 <use href="#gear" x="1893.1" y="180.4"/>
 <text x="1505" y="206.9">Printer:</text>
 <rect x="1505.5" y="212.5" width="377" height="23" fill="#fff" stroke="#6e6e6e"/>
 <rect x="1514.5" y="217.5" width="13" height="13" fill="#fff" stroke="#777"/>
 <rect x="1514.5" y="221" width="13" height="1" fill="#777"/>
 <rect x="1516" y="219" width="3" height="3" fill="#ec6a1e"/>
 <text x="1550" y="227.7" font-size="11.7">Voron DualToolhead * Voron_Dual_SB 0.6 0.6 (modified)</text>
 <use href="#chev" x="1870.3" y="223.8"/>
 <use href="#gear" x="1893.1" y="223.4"/>
 <text x="1507" y="259.4">Supports:</text>
 <rect x="1560.5" y="243.5" width="322" height="23" fill="#fff" stroke="#6e6e6e"/>
 <text x="1568" y="259.4">Everywhere</text>
 <use href="#chev" x="1870.3" y="255"/>
 <text x="1507" y="286">Infill:</text>
 <rect x="1536.5" y="270.5" width="79" height="23" fill="#fff" stroke="#6e6e6e"/>
 <text x="1544.5" y="286">15%</text>
 <use href="#chev" x="1603.5" y="282"/>
 <text x="1635" y="286">Brim:</text>
 <rect x="1667.5" y="274.5" width="13" height="13" fill="#fff" stroke="#333"/>
 <!-- object list -->
 <rect x="1505.5" y="300.5" width="397" height="178.5" fill="#fff" stroke="#6e6e6e"/>
 <rect x="1506" y="325" width="396" height="1" fill="#b8b8b8"/>
 <rect x="1705" y="301" width="1" height="24" fill="#e5e5e5"/>
 <rect x="1735" y="301" width="1" height="24" fill="#e5e5e5"/>
 <rect x="1815" y="301" width="1" height="24" fill="#e5e5e5"/>
 <text x="1512" y="316.9" font-size="11.5">Name</text>
 <text x="1754" y="316.9" font-size="11.5">Extruder</text>
 <text x="1840" y="316.9" font-size="11.5">Editing</text>
 <rect x="1506" y="326" width="396" height="20.5" fill="#d9d9d9" stroke="#9a9a9a" stroke-width="0.8"/>
 <path d="M1510.5 334L1513.7 337L1516.9 334" fill="none" stroke="#333" stroke-width="1.3"/>
 <text x="1525" y="339.8" font-size="11.5" fill="#f5f5f5">PillDispBody V8.stl</text>
 <g transform="translate(1721,336)"><path d="M-6.5 0C-3 -5 3 -5 6.5 0C3 5 -3 5 -6.5 0Z" fill="none" stroke="#777" stroke-width="1.3"/><circle r="2.2" fill="#777"/></g>
 <rect x="1739.5" y="328.5" width="31" height="15" fill="#bdbdbd" stroke="#777"/>
 <text x="1775.6" y="339.8" font-size="11.5" fill="#f5f5f5">default</text>
 <g transform="translate(1858.7,336)"><path d="M-1 -4H-5V5H4V1" fill="none" stroke="#777" stroke-width="1.2"/><circle cx="2.5" cy="-3" r="2.3" fill="none" stroke="#ec6a1e" stroke-width="1.3"/></g>
 <g transform="translate(1540.5,358)"><path d="M-5 -6L-2 -3M5 -6L2 -3" stroke="#999" stroke-width="0.9"/><path d="M-3 -3H3L2 4L0 6L-2 4Z" fill="#ffd4c0" stroke="#ec6a1e" stroke-width="0.8"/></g>
 <text x="1553" y="361.7" font-size="11.5">Paint-on supports</text>
 <g transform="translate(1541.6,380)"><rect x="-3.5" y="-6.5" width="9" height="10" rx="1.5" fill="none" stroke="#555" stroke-width="1"/><path d="M-6.5 2V7M-9 4.5H-4" stroke="#ec6a1e" stroke-width="1.2"/></g>
 <text x="1553" y="383.6" font-size="11.5">PillDispBody V8.stl</text>
 <rect x="1739.5" y="372.5" width="31" height="15" fill="#bdbdbd" stroke="#777"/>
 <text x="1775.6" y="383.6" font-size="11.5">default</text>
 <use href="#gear" x="1858.7" y="380"/>
 <g transform="translate(1541.6,402)"><rect x="-3.5" y="-6.5" width="9" height="10" rx="1.5" fill="none" stroke="#555" stroke-width="1"/><path d="M-6.5 2V7M-9 4.5H-4" stroke="#ec6a1e" stroke-width="1.2"/></g>
 <text x="1553" y="405.5" font-size="11.5">PillDispSlide.stl</text>
 <rect x="1739.5" y="394.5" width="31" height="15" fill="#bdbdbd" stroke="#777"/>
 <text x="1775.6" y="405.5" font-size="11.5">default</text>
 <use href="#gear" x="1858.7" y="402"/>
 <!-- object manipulation -->
 <path d="M1514 492.5H1505.5V668.5H1902.5V492.5H1632" fill="none" stroke="#dcdcdc"/>
 <text x="1517" y="496.8" font-size="11.6" font-weight="bold">Object manipulation</text>
 <rect x="1513.5" y="505.5" width="149" height="23" fill="#fff" stroke="#6e6e6e"/>
 <text x="1521" y="521.2" font-size="11.8">World coordinates</text>
 <use href="#chev" x="1650.5" y="517"/>
 <text x="1681" y="520.2" font-weight="bold" font-size="11.5">X</text>
 <text x="1741.5" y="520.2" font-weight="bold" font-size="11.5">Y</text>
 <text x="1802.5" y="520.2" font-weight="bold" font-size="11.5">Z</text>
 <g fill="none" stroke="#333" stroke-width="1.6"><path d="M1697.5 510.5H1695.5V521H1697.5M1706 510.5H1708V521H1706"/><path d="M1757.5 510.5H1755.5V521H1757.5M1766 510.5H1768V521H1766"/><path d="M1818 510.5H1816V521H1818M1826.5 510.5H1828.5V521H1826.5"/></g>
 <path d="M1701.8 510V512M1701.8 519.5V521.5M1761.8 510V512M1761.8 519.5V521.5M1822.3 510V512M1822.3 519.5V521.5" stroke="#555" stroke-width="1"/>
 <text x="1513" y="547.3" font-size="11.8">Position:</text>
 <text x="1513" y="573" font-size="11.8">Rotate (relative):</text>
 <text x="1532" y="598.8" font-size="11.8">Scale factors:</text>
 <text x="1532" y="625.1" font-size="11.8">Size [World]:</text>
 <g fill="#fff" stroke="#6e6e6e">
  <rect x="1666.5" y="531.5" width="57" height="23"/><rect x="1727.5" y="531.5" width="57" height="23"/><rect x="1788.5" y="531.5" width="57" height="23"/>
  <rect x="1666.5" y="558.5" width="57" height="23"/><rect x="1727.5" y="558.5" width="57" height="23"/><rect x="1788.5" y="558.5" width="57" height="23"/>
  <rect x="1666.5" y="585.5" width="57" height="23"/><rect x="1727.5" y="585.5" width="57" height="23"/><rect x="1788.5" y="585.5" width="57" height="23"/>
  <rect x="1666.5" y="612.5" width="57" height="23"/><rect x="1727.5" y="612.5" width="57" height="23"/><rect x="1788.5" y="612.5" width="57" height="23"/>
 </g>
 <g font-size="11.3">
  <text x="1674" y="547.3">132.82</text><text x="1735" y="547.3">193.67</text><text x="1796" y="547.3">30</text>
  <text x="1674" y="574.4">0</text><text x="1735" y="574.4">0</text><text x="1796" y="574.4">0</text>
  <text x="1674" y="601.3">100</text><text x="1735" y="601.3">100</text><text x="1796" y="601.3">100</text>
  <text x="1674" y="627.9">38.9</text><text x="1735" y="627.9">39.04</text><text x="1796" y="627.9">30</text>
 </g>
 <text x="1849" y="547" font-size="11.5">mm</text>
 <text x="1850" y="571" font-size="10">°</text>
 <text x="1850" y="600" font-size="11.5">%</text>
 <text x="1849" y="627" font-size="11.5">mm</text>
 <g transform="translate(1521,607.5)"><rect x="-5.5" y="-1" width="11" height="8" rx="1" fill="#7a7a7a"/><path d="M-3.2 -1V-3.5A3.2 3.2 0 0 1 3.2 -3.5V-1" fill="none" stroke="#7a7a7a" stroke-width="2"/><circle cy="3" r="1.2" fill="#fff"/></g>
 <rect x="1518.5" y="643.5" width="13" height="13" fill="#fff" stroke="#333"/>
 <text x="1537" y="655" font-size="11.8">Inches</text>
 <!-- info -->
 <path d="M1512 682.5H1505.5V751.5H1902.5V682.5H1540" fill="none" stroke="#dcdcdc"/>
 <text x="1514" y="686.7" font-size="11.8" font-weight="bold">Info</text>
 <text x="1510.3" y="703.8" font-size="11.8">Size:</text>
 <text x="1562.4" y="703.8" font-size="11">38.90 x 39.04 x 30.00</text>
 <text x="1681.2" y="703.8" font-size="11.8">Volume:</text>
 <text x="1741.5" y="703.8" font-size="11">15064.72</text>
 <g transform="translate(1802.5,699.5)"><circle r="6.5" fill="none" stroke="#555" stroke-width="1.1"/><path d="M0 -4V1.5" stroke="#555" stroke-width="1.3"/><circle cy="3.6" r="0.8" fill="#555"/></g>
 <text x="1510.3" y="725" font-size="11.8">Facets:</text>
 <text x="1562.4" y="725" font-size="11">3346 (2 shells)</text>
 <text x="1512.5" y="743.7" font-size="11.8">No errors detected</text>
 <!-- sliced info -->
 <svg x="1500" y="755" width="403" height="235" viewBox="1500 755 403 235" overflow="hidden">
 <path d="M1511 765.5H1505.5V1100H1902.5V765.5H1577" fill="none" stroke="#dcdcdc"/>
 <text x="1513.7" y="769.7" font-size="11.8" font-weight="bold">Sliced Info</text>
 <g font-size="11.8">
 <text x="1510.4" y="786.9">Used Filament (g):</text><text x="1659.9" y="786.9">20.14</text>
 <text x="1522.4" y="801.9">- Filament at extruder 1</text><text x="1659.9" y="801.9">17.22</text>
 <text x="1522.4" y="817">- Filament at extruder 2</text><text x="1659.9" y="817">2.92</text>
 <text x="1510.4" y="837.5">Used Filament (m):</text><text x="1659.9" y="837.5">6.76</text>
 <text x="1522.4" y="853">- objects</text><text x="1659.9" y="853">5.46</text>
 <text x="1522.4" y="868">- wipe tower</text><text x="1659.9" y="868">1.30</text>
 <text x="1510.4" y="888.8">Used Filament (mm<tspan font-size="7" dy="-5">3</tspan><tspan dy="5">)</tspan></text><text x="1659.9" y="888.8">16259.63</text>
 <text x="1510.4" y="909.9">Cost:</text><text x="1659.9" y="909.9">0.70</text>
 <text x="1522.4" y="924.9">- objects</text><text x="1659.9" y="924.9">0.59</text>
 <text x="1522.4" y="940">- wipe tower</text><text x="1659.9" y="940">0.11</text>
 <text x="1510.4" y="961">Estimated printing time:</text>
 <text x="1519.7" y="976">- normal mode</text><text x="1659.9" y="976">2h1m</text>
 <text x="1510.4" y="995.5">Number of tool changes:</text><text x="1659.9" y="995.5">133</text>
 </g>
 </svg>
 <!-- export -->
 <rect x="1505" y="995" width="378" height="32" fill="#e1e1e1"/>
 <text x="1693" y="1015.1" font-size="11.7" font-weight="bold" text-anchor="middle">Export G-code</text>
 <rect x="1888" y="995" width="32" height="32" fill="#e1e1e1"/>
 <text x="1889" y="1024" font-size="30" font-weight="bold" fill="#7a7a7a" transform="translate(1889,0) scale(0.82,1) translate(-1889,0)">G</text>
 <polygon points="1908.5,1002 1918.5,1011 1908.5,1020" fill="#ec6a1e"/>
</svg>

</body></html>
